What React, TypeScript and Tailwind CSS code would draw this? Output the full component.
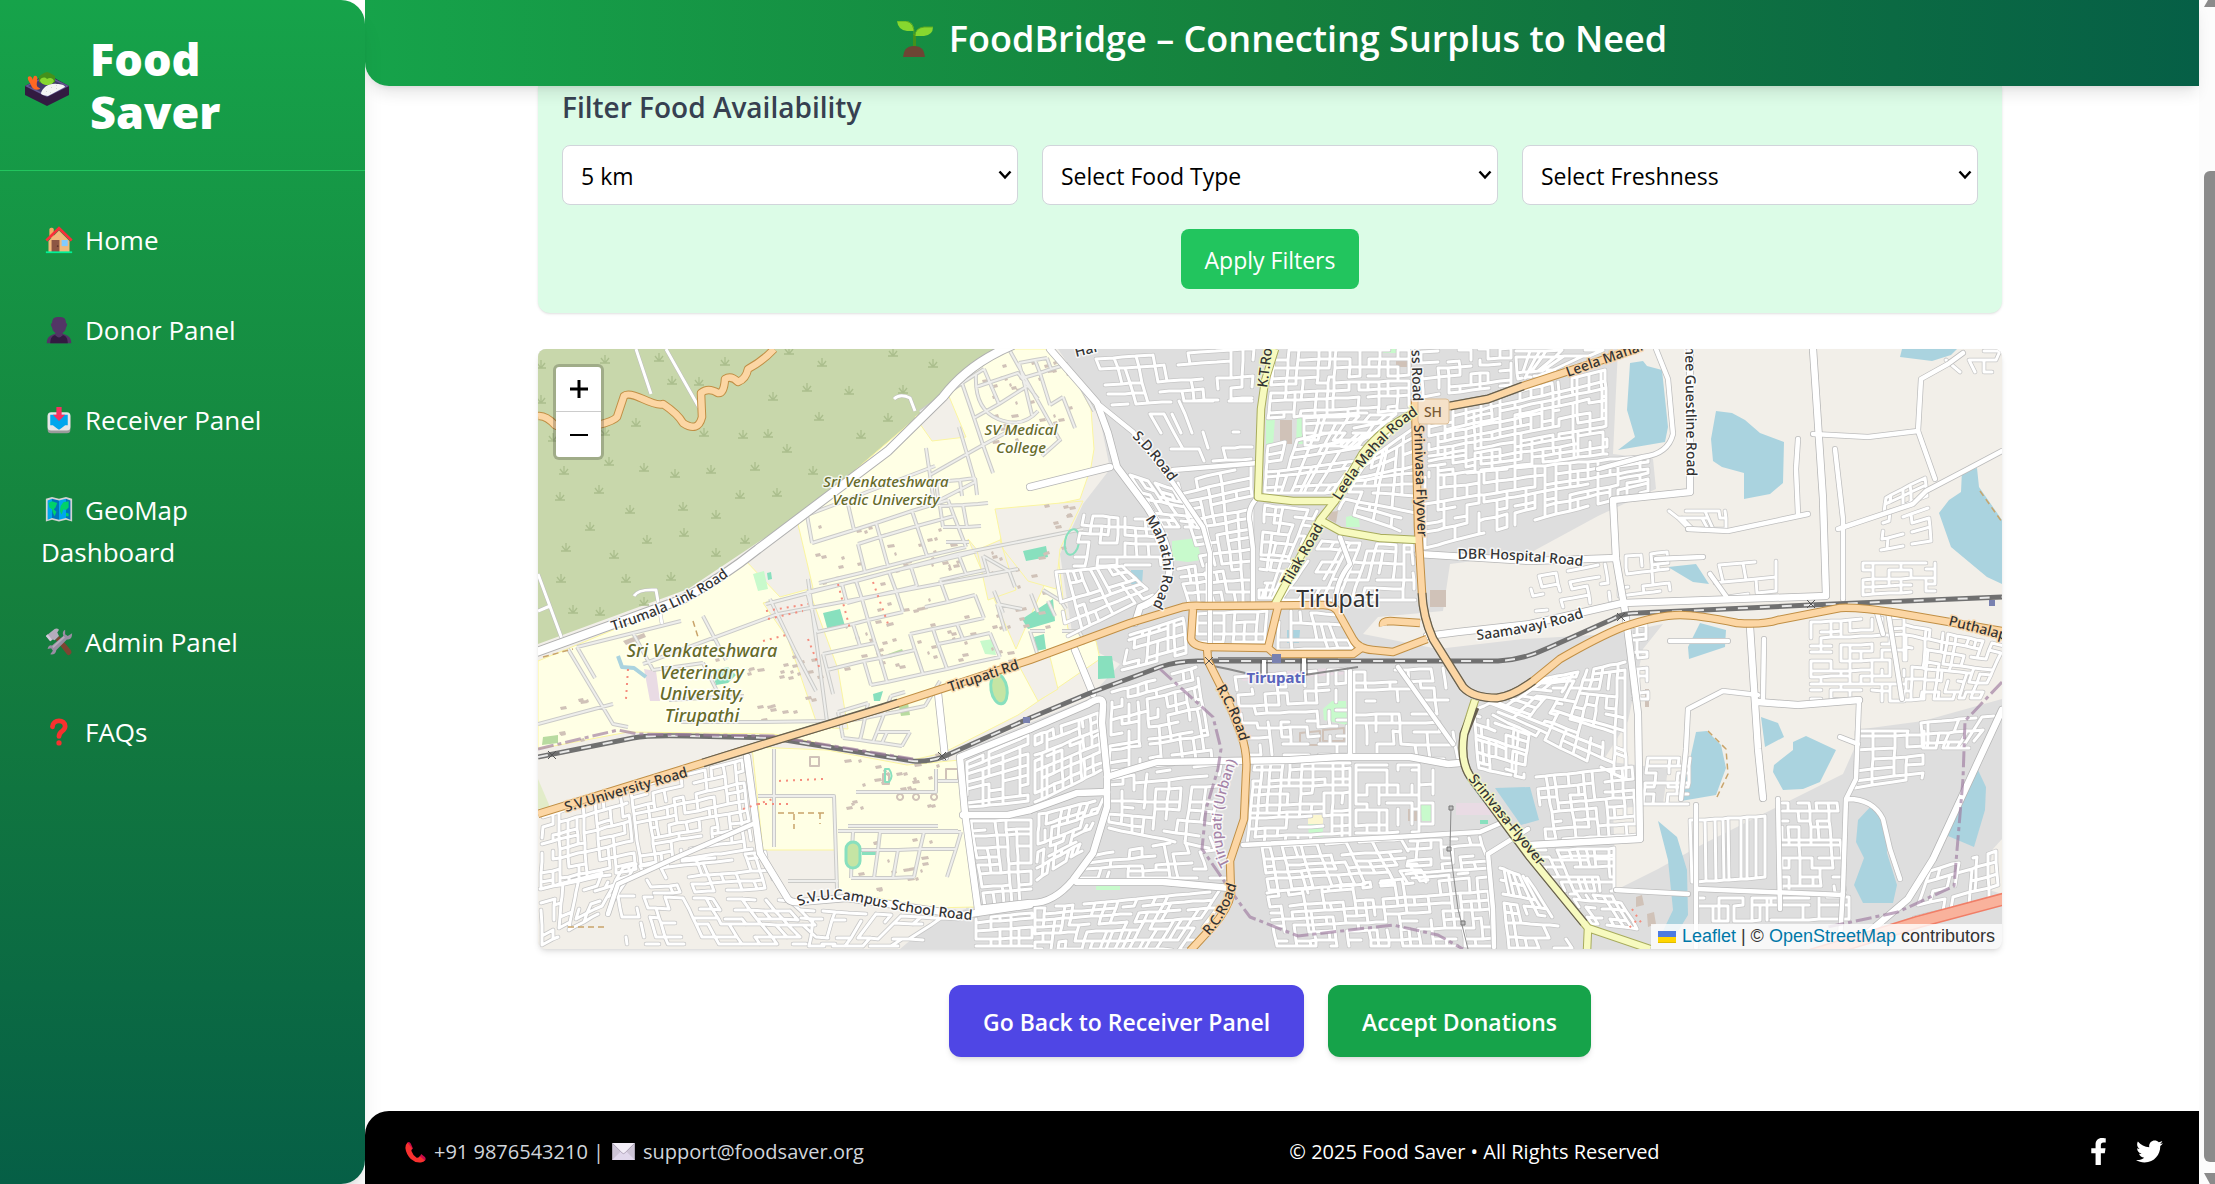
import React from "react";
import { FaFacebookF, FaTwitter } from "react-icons/fa";

/* ---------- small colour pictograms ---------- */

type IconProps = { className?: string };

const BentoIcon = ({ className }: IconProps) => (
  <svg viewBox="0 0 46 34" className={className} aria-hidden="true">
    <path d="M1 14 23 2l22 12v9L23 34 1 23z" fill="#321b41" />
    <path d="M1 14 23 3l22 11-22 11z" fill="#635994" />
    <path d="M4 14 23 5l19 9-19 9z" fill="#433b6b" />
    <path d="M15 5c2-3 4-3 5-4l3-1 3 1 5 3v6l-7 3-9-3z" fill="#44911b" />
    <path d="M16 8c2-3 5-3 7-1 3-2 6-1 7 2-1 3-4 4-7 4s-7-2-7-5z" fill="#86d72f" />
    <path d="M4 5c2-2 4 0 5 3 0-3 1-5 3-4 3 1 0 7 1 10 1 2 4 2 3 3-4 2-8 0-9-4C6 10 3 8 4 5z" fill="#ff6723" />
    <path d="M17 21c2-6 8-10 16-9 4 0 8 1 8 3L24 24c-4-1-7-1-7-3z" fill="#f4f4f4" />
    <path d="m22 19 1 1m4-5 1 1m4-3 1 1m-7 6 1 1m5-5 1 1" stroke="#d3d3d3" />
  </svg>
);

const HouseIcon = ({ className }: IconProps) => (
  <svg viewBox="0 0 32 32" className={className} aria-hidden="true">
    <path d="M5 4q0-2 2-2h1q2 0 2 2v10H5z" fill="#f3ad61" />
    <path d="M16 5 28 17v13H4V17z" fill="#f1b97c" />
    <path d="M7.500 16h9v14h-9z" fill="#8c5543" />
    <path d="M19 16h7v7h-7z" fill="#83cbff" />
    <path d="M1.500 16.500 16 2.500l14.500 14" fill="none" stroke="#f92f3a" strokeWidth="3" />
    <circle cx="14.500" cy="23" r="1" fill="#5d352a" />
    <path d="M1 29h30v2H1z" fill="#00f397" />
  </svg>
);

const PersonIcon = ({ className }: IconProps) => (
  <svg viewBox="0 0 32 32" className={className} aria-hidden="true">
    <path d="M2 31c0-7 4-9 10-11h8c6 2 10 4 10 11z" fill="#533566" />
    <path d="M6 31c0-7 3-9 7-10h6c4 1 7 3 7 10z" fill="#321b41" />
    <path d="M12 17h8v5q-4 5-8 0z" fill="#533566" />
    <path d="M8 8q0-7 6-7h4q6 0 6 7 2 1 1 3l-1 2q-1 7-8 7t-8-7l-1-2q-1-2 1-3z" fill="#533566" />
  </svg>
);

const InboxIcon = ({ className }: IconProps) => (
  <svg viewBox="0 0 32 32" className={className} aria-hidden="true">
    <rect x="3" y="8" width="26" height="23" rx="4" fill="#9b9b9b" />
    <rect x="3" y="7" width="26" height="21" rx="4" fill="#e6e6e6" />
    <path d="M6 10h20v12h-3l-4 3-3 2-3-2-4-3H6z" fill="#00a6ed" />
    <path d="M13 1h6v9h4l-7 7-7-7h4z" fill="#f92f60" />
  </svg>
);

const MapIcon = ({ className }: IconProps) => (
  <svg viewBox="0 0 32 32" className={className} aria-hidden="true">
    <path d="m1 3 7-2 8 2 8-2 7 2v26l-7-2-8 2-8-2-7 2z" fill="#d3d3d3" />
    <path d="m3 5 5-2v22l-5 2z" fill="#00a6ed" />
    <path d="m8 3 8 2v22l-8-2z" fill="#0074ba" />
    <path d="m16 5 8-2v22l-8 2z" fill="#00a6ed" />
    <path d="m24 3 5 2v22l-5-2z" fill="#0074ba" />
    <path d="m4 8 4-2 6 2-2 5-2 2 3 3-2 5-2-4-1-4-3-2zm14 3 3-4 6-1v7l-3 3-3-1-2 6-2-4zm6 8 3 1v3h-3z" fill="#00d26a" />
  </svg>
);

const ToolsIcon = ({ className }: IconProps) => (
  <svg viewBox="0 0 32 32" className={className} aria-hidden="true">
    <path d="m12 13 4-4 14 17q1 3-1 4-2 2-4 0z" fill="#7d4533" />
    <path d="m1 9 10-8q3-1 5 1l-2 3 2 4-5 5-2-1-3 2z" fill="#b4acbc" />
    <path d="m1 9 2-2 5 6-2 2z" fill="#d3cbdc" />
    <path d="M23 2q-4 2-2 7L8 20q-4-1-5 4l4-1 2 3-3 4q6 1 7-5l12-12q6 1 6-7l-5 3-3-2z" fill="#998ea4" />
    <path d="M22 10 9 22" stroke="#b4acbc" strokeWidth="2" />
  </svg>
);

const QuestionIcon = ({ className }: IconProps) => (
  <svg viewBox="0 0 32 32" className={className} aria-hidden="true">
    <path d="M8.500 10C9 1 23 1 23 9.500c0 6-7 5-7 11.500" fill="none" stroke="#f8312f" strokeWidth="5.500" strokeLinecap="round" />
    <circle cx="16" cy="28.500" r="3" fill="#f8312f" />
  </svg>
);

const SeedlingIcon = ({ className }: IconProps) => (
  <svg viewBox="0 0 36 36" className={className} aria-hidden="true">
    <path d="M17.500 26V13" stroke="#44911b" strokeWidth="3" />
    <path d="M0 0h9q8 1 8 10H10Q1 9 0 0z" fill="#86d72f" />
    <path d="M36 6h-9q-9 1-9 9h9q9-1 9-9z" fill="#86d72f" />
    <path d="M0 0h9q9 2 8 14M36 6h-9q-9 1-9 9" fill="none" stroke="#5ba81f" />
    <path d="M6 36q1-11 10-11h2q9 0 10 11z" fill="#6d4534" />
  </svg>
);

const PhoneIcon = ({ className }: IconProps) => (
  <svg viewBox="0 0 32 32" className={className} aria-hidden="true">
    <path d="M5 2q3-2 5 2l3 7-5 5zM20 28l5-9 5 4q3 3 0 6z" fill="#ca0b4a" />
    <path d="M5 2q-3 3-3 8 1 9 8 16 8 7 16 5 4-1 4-3L23 22q-3 3-5 2-5-3-7-9-1-3 1-4z" fill="#f8312f" />
  </svg>
);

const EnvelopeIcon = ({ className }: IconProps) => (
  <svg viewBox="0 0 32 24" className={className} aria-hidden="true">
    <path d="M0 0h32v24H0z" fill="#cdc4d6" />
    <path d="m0 24 12-12h8l12 12z" fill="#e1d8ec" />
    <path d="M0 0h32L18 14q-2 2-4 0z" fill="#f3eef8" />
    <path d="m0 0 14 14q2 2 4 0L32 0" fill="none" stroke="#998ea4" />
  </svg>
);

/* ---------- map drawing ---------- */

const randomFrom = (seed: number) => {
  let s = seed * 9301 + 49297;
  return () => {
    s = (s * 1103515245 + 12345) % 2147483648;
    return s / 2147483648;
  };
};

/** x and y of four corners (clockwise from top left), columns, rows, share of gaps */
type Quarter = [number, number, number, number, number, number, number, number, number, number, number];

const streetsOf = (q: Quarter, seed: number) => {
  const [ax, ay, bx, by, cx, cy, dx, dy, cols, rows, gaps] = q;
  const rnd = randomFrom(seed + 3);
  const us = Array.from({ length: cols + 1 }, (_, i) => (i + (rnd() - 0.5) * 0.6) / cols);
  const vs = Array.from({ length: rows + 1 }, (_, i) => (i + (rnd() - 0.5) * 0.6) / rows);
  const at = (u: number, v: number) => {
    const x = (1 - v) * ((1 - u) * ax + u * bx) + v * ((1 - u) * dx + u * cx);
    const y = (1 - v) * ((1 - u) * ay + u * by) + v * ((1 - u) * dy + u * cy);
    return `${Math.round(x)} ${Math.round(y)}`;
  };
  let d = "";
  vs.forEach((v) => {
    for (let i = 0; i < cols; i++) if (rnd() > gaps) d += `M${at(us[i], v)}L${at(us[i + 1], v)}`;
  });
  us.forEach((u) => {
    for (let j = 0; j < rows; j++) if (rnd() > gaps + 0.12) d += `M${at(u, vs[j])}L${at(u, vs[j + 1])}`;
  });
  return d;
};

const quarters: Quarter[] = [
  [560, 12, 718, 2, 716, 48, 575, 55, 12, 4, 0.35],
  [600, 50, 716, 50, 715, 112, 640, 115, 8, 4, 0.55],
  [738, 2, 872, 2, 872, 62, 732, 70, 13, 8, 0.2],
  [728, 98, 860, 72, 800, 146, 726, 146, 9, 6, 0.15],
  [768, 68, 872, 64, 820, 100, 768, 98, 10, 4, 0.2],
  [828, 112, 874, 78, 876, 186, 800, 160, 6, 9, 0.15],
  [886, 4, 975, 0, 975, 38, 888, 50, 8, 5, 0.25],
  [978, 0, 1070, 0, 1000, 28, 980, 32, 8, 3, 0.3],
  [888, 66, 1070, 22, 1072, 106, 888, 130, 19, 11, 0.18],
  [888, 130, 1112, 108, 1112, 140, 888, 196, 22, 6, 0.2],
  [590, 125, 636, 140, 664, 180, 625, 180, 5, 6, 0.2],
  [642, 136, 710, 120, 712, 252, 676, 252, 5, 13, 0.15],
  [725, 156, 782, 162, 738, 250, 720, 250, 5, 10, 0.15],
  [786, 192, 876, 196, 880, 250, 746, 250, 10, 6, 0.2],
  [545, 165, 615, 170, 622, 215, 535, 215, 8, 5, 0.2],
  [520, 225, 585, 218, 615, 245, 532, 285, 8, 5, 0.15],
  [640, 220, 668, 215, 668, 252, 650, 252, 3, 4, 0.2],
  [662, 266, 730, 264, 728, 292, 662, 292, 6, 3, 0.15],
  [742, 264, 800, 268, 815, 298, 740, 300, 6, 3, 0.2],
  [590, 285, 645, 268, 648, 305, 582, 322, 7, 4, 0.2],
  [575, 345, 660, 320, 676, 408, 572, 420, 10, 9, 0.3],
  [496, 385, 560, 362, 564, 422, 496, 455, 9, 7, 0.15],
  [572, 430, 680, 416, 668, 500, 572, 480, 9, 7, 0.35],
  [500, 466, 566, 450, 545, 500, 498, 530, 8, 7, 0.2],
  [556, 506, 668, 488, 686, 532, 545, 530, 10, 4, 0.35],
  [496, 560, 690, 542, 650, 598, 496, 598, 19, 6, 0.25],
  [700, 330, 812, 322, 812, 406, 712, 406, 9, 9, 0.4],
  [816, 322, 905, 318, 920, 408, 816, 406, 8, 8, 0.4],
  [714, 416, 815, 414, 815, 490, 706, 494, 10, 10, 0.14],
  [818, 414, 893, 414, 893, 482, 818, 484, 7, 7, 0.3],
  [722, 500, 865, 492, 890, 530, 728, 540, 13, 5, 0.2],
  [730, 542, 950, 520, 958, 598, 740, 598, 21, 8, 0.22],
  [870, 494, 940, 490, 948, 520, 866, 526, 7, 4, 0.25],
  [944, 360, 1005, 330, 1088, 310, 1090, 430, 12, 11, 0.22],
  [935, 365, 990, 385, 985, 430, 940, 420, 7, 6, 0.25],
  [1000, 430, 1092, 420, 1096, 486, 1010, 490, 10, 7, 0.2],
  [962, 520, 990, 530, 1035, 598, 970, 598, 6, 7, 0.2],
  [998, 500, 1078, 498, 1078, 540, 1020, 540, 8, 6, 0.18],
  [1032, 545, 1080, 548, 1100, 580, 1054, 575, 6, 4, 0.3],
  [1090, 278, 1110, 276, 1112, 350, 1092, 350, 2, 9, 0.2],
  [1110, 410, 1150, 410, 1148, 455, 1106, 455, 4, 6, 0.2],
  [1150, 456, 1226, 452, 1226, 540, 1152, 545, 9, 1, 0],
  [1160, 545, 1310, 545, 1310, 572, 1160, 575, 20, 2, 0.25],
  [1242, 452, 1300, 452, 1308, 545, 1242, 545, 6, 10, 0.25],
  [1322, 380, 1388, 380, 1386, 430, 1320, 440, 4, 6, 0.2],
  [1382, 375, 1455, 368, 1430, 400, 1384, 400, 7, 3, 0.15],
  [1275, 275, 1365, 270, 1365, 352, 1275, 350, 9, 10, 0.3],
  [1368, 276, 1464, 296, 1440, 350, 1368, 352, 11, 7, 0.18],
  [1395, 520, 1460, 500, 1464, 545, 1380, 565, 7, 4, 0.3],
  [1325, 215, 1400, 215, 1400, 242, 1325, 246, 6, 4, 0.3],
  [1345, 150, 1385, 130, 1390, 190, 1340, 200, 4, 6, 0.35],
  [1080, 210, 1132, 205, 1135, 240, 1082, 246, 5, 4, 0.25],
  [1170, 220, 1235, 215, 1235, 240, 1178, 246, 4, 2, 0.35],
  [992, 230, 1070, 215, 1075, 250, 1000, 262, 6, 4, 0.55],
  [1128, 160, 1190, 160, 1190, 180, 1150, 180, 6, 2, 0.4],
  [1400, 2, 1462, 2, 1455, 20, 1420, 20, 5, 2, 0.5],
  [4, 470, 90, 445, 100, 520, 2, 540, 10, 8, 0.22],
  [95, 440, 205, 412, 215, 500, 105, 515, 11, 9, 0.22],
  [2, 540, 100, 515, 70, 560, 4, 598, 8, 5, 0.4],
  [105, 515, 228, 500, 240, 540, 120, 545, 10, 4, 0.35],
  [80, 545, 250, 550, 300, 598, 90, 598, 14, 5, 0.4],
  [260, 560, 420, 570, 370, 598, 260, 598, 12, 3, 0.45],
  [430, 412, 492, 385, 492, 455, 430, 460, 5, 7, 0.12],
  [430, 470, 494, 468, 494, 552, 445, 556, 5, 9, 0.12],
  [440, 568, 494, 562, 494, 598, 440, 598, 5, 4, 0.12],
];

const campusQuarters: Quarter[] = [
  [385, 65, 470, 8, 520, 100, 400, 160, 4, 3, 0.4],
  [262, 165, 405, 110, 440, 200, 275, 240, 4, 3, 0.15],
  [400, 130, 450, 125, 458, 190, 410, 190, 3, 4, 0.4],
  [478, 8, 520, 2, 550, 60, 500, 100, 3, 3, 0.3],
  [275, 245, 440, 205, 480, 300, 300, 340, 7, 5, 0.3],
  [38, 300, 225, 255, 285, 375, 80, 375, 4, 3, 0.6],
  [450, 210, 520, 250, 545, 295, 480, 312, 4, 4, 0.4],
  [300, 362, 400, 330, 360, 400, 305, 390, 4, 3, 0.25],
  [308, 482, 420, 482, 405, 532, 306, 534, 4, 2, 0.05],
];

const streetPath = quarters.map(streetsOf).join("");
const campusPath =
  campusQuarters.map(streetsOf).join("") +
  "M438 25Q436 60 460 70T500 62M438 38 480 24 500 50M236 400V498M220 447H296L299 540M318 443H398V420M310 477H400M300 482H420M420 432H400M250 532H300M270 230 290 380M228 255 420 205 545 180M105 315 240 265 480 220M30 300 75 375 90 378M0 375 75 355";

const buildingPath = (() => {
  const rnd = randomFrom(77);
  const areas = [
    [275, 175, 150, 60], [300, 250, 170, 70], [440, 10, 90, 90], [450, 200, 60, 80],
    [170, 300, 110, 70], [300, 400, 110, 60], [320, 490, 80, 50], [20, 350, 40, 40], [500, 150, 40, 50],
  ];
  let d = "";
  areas.forEach(([x, y, w, h]) => {
    for (let i = 0; i < (w * h) / 260; i++) {
      const px = Math.round(x + rnd() * w);
      const py = Math.round(y + rnd() * h);
      const a = 2 + Math.round(rnd() * 5);
      d += `M${px} ${py}l${a} -1l1 3l-${a} 1z`;
    }
  });
  return d;
})();

const whiteRoads = [
  "M512 0 559 54 570 84 579 118 609 158Q636 200 631 225T602 258L597 274",
  "M492 138 572 118",
  "M1152 0V143L1075 151 1078 210 1087 262 1092 300 1100 365 1102 490 992 496",
  "M1275 0 1280 75 1285 150 1288 247 1085 254 1050 262 992 275 920 283 889 287",
  "M880 205 992 212 1078 209",
  "M1212 278 1220 400 1225 449",
  "M1220 353 1260 356 1321 351",
  "M1464 361 1395 510 1370 550 1330 584",
  "M492 461 539 444 569 443",
  "M569 428 619 413 752 411 800 408 872 408 910 415 922 414",
  "M492 380 550 355Q566 345 565 357L564 374 569 424V458L555 504 535 531Q515 555 492 554L440 560",
  "M539 533 625 533 692 539",
  "M209 408 222 504 250 550Q253 554 262 553L309 549 425 566 492 556",
  "M422 408 427 464 440 560M425 466 470 466 492 461M400 344 407 408M422 408 492 380M537 301 555 345",
];

const mediumRoads = [
  "M559 54 595 83 635 134 665 178 672 204V301",
  "M635 121 720 114M720 148Q708 160 712 175L715 200V254",
  "M802 188 812 215Q798 232 797 256",
  "M705 496 859 488 942 483 965 473M950 505 955 560 956 598M950 505 990 480",
  "M812 322V408M1350 262 1364 350M1464 102 1430 120 1388 142 1375 155 1300 180M1275 85 1330 88 1380 82 1397 130",
  "M1380 82 1383 30 1410 15 1425 4M1118 0 1130 30 1135 85Q1130 105 1105 108L1060 120",
  "M1321 351 1318 430 1308 450 1305 540 1302 590M1310 450Q1335 450 1345 470L1352 500 1362 530",
  "M1220 346 1185 342 1150 360 1148 400 1143 450M1305 546 1160 540M1320 395 1302 388",
  "M1158 456V598M1240 450 1242 560M1226 290 1225 350M1132 292 1190 292",
  "M860 318 915 395M70 565 80 535 135 510 215 475M100 30",
  "M1260 90 1258 120 1260 165M1297 100 1305 170V250M1150 180 1190 182 1270 165",
  "M1118 210 1165 208M1190 250 1172 225M1338 260 1345 285M1078 541 1150 545",
];

const forestPaths =
  "M98 0 113 45M128 0 163 62M0 225 24 290 M0 262 12 257M356 50Q362 44 372 49L377 62M96 247Q100 240 118 241L124 275";

const linkRoad = "M-4 304 145 250Q185 228 220 200L350 102 405 48Q430 15 475 -4";

const orangeRoads = [
  "M0 67Q8 66 17 76 40 88 60 76 76 72 79 68L86 47Q90 43 105 50T125 55Q140 65 145 74 160 84 164 68L163 44Q170 38 180 44 186 45 187 30 193 26 200 33 208 30 210 20 225 12 236 0",
  "M0 465 142 421 239 391 345 359 492 311 592 274 645 258Q655 256 665 257L785 256Q798 256 801 265L815 290Q820 300 835 301L855 303 889 290",
  "M655 260 653 290Q655 297 669 298L730 299 740 258M730 299 737 305H815L826 297",
  "M845 277Q844 272 852 272L882 274",
  "M877 50 880 178 884 244Q885 268 895 290L925 338Q935 349 959 349 975 347 995 332L1022 310Q1060 288 1085 278 1120 266 1142 266 1160 266 1199 274 1225 276 1240 271L1302 259Q1320 258 1359 264L1464 282",
  "M877 60 912 57 950 50 985 37 1098 0",
  "M669 298 670 312 690 352 703 385Q710 405 708 425L706 470 692 512 693 545Q690 560 675 577L652 602",
];

const yellowRoads = [
  "M737 0 727 32 723 60 720 148 755 152H797",
  "M737 255 782 171 797 152 825 104Q845 78 877 64",
  "M782 171 802 182 842 189 880 191",
  "M937 351 926 385Q922 412 932 427L992 508 1050 579 1112 600M1050 579 1049 602",
];

const railway =
  "M0 408 95 389Q110 386 150 387L235 389 375 412Q390 413 405 408L492 369 552 344 622 318Q640 312 660 312H960Q985 311 1010 299L1075 270Q1085 264 1100 264L1272 256 1464 248";

const waters = [
  "1092,14 1105,12 1109,17 1124,21 1130,78 1127,93 1080,101 1097,88 1089,61",
  "1178,62 1194,64 1207,71 1222,84 1246,93 1245,134 1232,145 1206,150 1206,124 1184,118 1175,112 1173,90",
  "1364,0 1419,0 1413,6 1394,12 1362,8",
  "1424,121 1439,119 1441,138 1464,171 1464,235 1449,228 1413,198 1401,164 1411,151 1423,143",
  "1130,218 1158,215 1171,235 1155,233",
  "1162,274 1188,281 1187,298 1151,310 1150,298",
  "1223,368 1240,374 1246,388 1227,398",
  "1255,393 1268,387 1298,401 1282,433 1265,440 1245,441 1235,423 1236,416 1255,401",
  "1158,383 1169,382 1183,396 1188,419 1178,446 1143,452",
  "1120,472 1139,488 1149,521 1150,566 1139,584 1124,584 1135,561 1130,511",
  "1335,455 1348,471 1349,504 1359,536 1355,554 1325,554 1316,536 1326,509 1318,493 1320,471",
  "1440,421 1448,438 1447,461 1436,498 1403,484 1422,444",
  "957,439 992,438 1001,471 983,476",
  "593,221 605,221 604,236 593,235",
  "749,281 762,281 761,294 749,294",
];

const tufts = [
  [67, 10], [121, 8], [187, 12], [251, 1], [284, 13], [355, 3], [395, 14], [134, 31], [161, 32], [235, 47],
  [269, 38], [311, 41], [365, 40], [98, 73], [281, 67], [350, 68], [166, 83], [205, 85], [230, 84], [323, 85],
  [249, 99], [71, 112], [26, 121], [106, 118], [137, 124], [173, 120], [217, 117], [275, 121], [22, 147],
  [61, 140], [202, 145], [239, 143], [92, 160], [145, 157], [178, 165], [52, 177], [146, 183], [109, 190],
  [28, 198], [76, 205], [178, 203], [207, 190], [23, 229], [88, 229], [133, 227], [35, 260], [62, 262], [106, 252],
  [3, 15], [3, 50], [15, 88], [67, 82],
];

const StreetMap = () => (
  <svg
    viewBox="0 0 1464 600"
    preserveAspectRatio="xMidYMid slice"
    className="block h-full w-full"
    role="img"
    aria-label="Street map of Tirupati"
    strokeLinejoin="round"
    fill="none"
  >
    <defs>
      <path id="p-tirumala" d="M75 282 Q150 258 192 226" />
      <path id="p-svu" d="M28 463 L162 424" />
      <path id="p-tirupatird" d="M412 343 L496 315" />
      <path id="p-campus" d="M261 557 Q290 545 330 555 T432 571" />
      <path id="p-sd" d="M594 88 Q615 108 642 147" />
      <path id="p-mahathi" d="M607 170 Q640 215 613 260" />
      <path id="p-kt" d="M729 39 L736 -14" />
      <path id="p-leela" d="M802 152 Q840 90 882 64" />
      <path id="p-tilak" d="M751 238 L788 174" />
      <path id="p-cross" d="M873 -22 L875 56" />
      <path id="p-sri" d="M876 76 L880 194" />
      <path id="p-leela2" d="M1030 28 L1114 -2" />
      <path id="p-guest" d="M1147 -24 L1149 140" />
      <path id="p-dbr" d="M920 210 Q960 208 1044 217" />
      <path id="p-saama" d="M939 291 Q1000 284 1050 267" />
      <path id="p-put" d="M1410 276 L1490 297" />
      <path id="p-rc1" d="M678 339 Q698 372 704 402" />
      <path id="p-rc2" d="M671 587 Q692 565 701 526" />
      <path id="p-urban" d="M692 515 Q670 480 704 398" />
      <path id="p-sri2" d="M930 430 L1006 524" />
      <path id="p-har" d="M538 8 L570 0" />
    </defs>

    <rect width="1464" height="600" fill="#dedede" />
    <path fill="#f2efe9" d="M0 290 420 30 450 0H520L560 60 572 120 545 155 522 205 535 290 582 315 550 350 428 400V560L400 568 362 600H0z" />
    <path fill="#f2efe9" d="M1080 0H1464V350L1385 372 1325 380 1305 425 1225 465 1165 495 1120 520 1078 541 1075 460 1125 455 1130 420 1065 412 1090 372 1105 300 1125 275 1075 285 985 290 900 300 825 285 840 268 905 262 912 215 990 205 1060 167 1118 140 1115 110 1075 105z" />
    <path fill="#f2efe9" d="M1464 490 1455 500 1448 540 1464 545z" />
    <path fill="#e2ecc9" d="M0 430 12 458 0 460z" />
    <path fill="#c8d7ab" d="M0 0H470Q440 8 425 22L405 42 350 95 270 160 150 240 0 295z" />
    <path fill="#ffffe5" stroke="#fbf5a0" d="M0 312 150 250 210 212 259 171 400 50 435 20 470 0H516L540 35 553 60 556 100 553 118 542 150 495 160 470 165 462 192 440 202 430 190 478 300 520 205 525 250 530 280 558 292 562 310 480 366 405 404 370 412 235 385 90 383 0 400z" />
    <path fill="#ffffe5" stroke="#fbf5a0" d="M214 398 289 401 369 416 422 411 427 464 437 558 392 559 300 541 297 501 225 501z" />
    <path fill="#f2efe9" stroke="#fbf5a0" d="M259 171 207 211 242 248 275 239zM377 68 410 45 428 88 394 92zM439 201 462 191 478 241 450 251zM457 160 545 152 522 200 518 240 490 232 465 200zM225 254 272 244 300 320 310 380 280 378 250 290zM480 315 510 300 520 340 500 352z" />
    <path fill="#e9dbe4" d="M106 320 118 322 122 352 112 352zM918 454 955 454 960 466 918 466zM700 325 810 318 812 325 705 332z" />

    {waters.map((points) => (
      <polygon key={points} points={points} fill="#aad3df" />
    ))}
    <path d="M80 307 84 318 96 319 108 328" stroke="#aad3df" strokeWidth="4" />
    <path fill="#c8facc" d="M634 192 659 189 663 211 650 213 634 211zM728 69H737L735 97H728zM759 69H767V95H758zM785 360 794 352H808L809 376 786 371zM770 475 785 474V488H771zM558 537H582V541H558zM882 456H893V472H884zM808 168 820 165 822 178H808zM845 0H862V4H845zM215 225 226 222 230 240 220 242zM442 292 455 290 458 306 447 305z" />
    <path fill="#fcf7d0" d="M770 466H785V475H770z" />
    <path fill="#88e0be" d="M285 264 302 260 307 277 290 282zM485 202 508 197 510 208 488 212zM484 270 515 250 517 272 490 280zM560 307 574 307 577 329 560 330zM174 322 190 318 198 326 190 334 178 336zM335 345 345 342 342 352 336 352zM324 502H338V506H324zM229 224 233 223 234 230 230 231zM942 471H950V475H942zM496 288 506 285 508 300 498 302z" />
    <path fill="#b8dba0" d="M361 358 370 354 372 366 363 367zM5 388 20 386 20 394 4 396zM350 305 364 300 366 304 352 309z" />
    <path fill="#d0c2b8" d="M742 71H754V95H742zM858 10H874V18H858zM892 241H908V258H892zM792 163 800 162 798 174 790 170zM85 292 106 284 108 288 88 296zM1098 548 1104 546 1106 556 1098 558zM1109 565 1116 563 1118 575 1110 578zM870 460h12v12h-12zM1107 340h4v18h-4z" />
    <path stroke="#d0c2b8" strokeWidth="2" d="M762 384 782 382V396H762zM785 381 806 379V392H785zM272 408h9v9h-9zM408 420h12v12h-12zM362 445a3 3 0 1 0 .1 0M378 445a3 3 0 1 0 .1 0M396 445a3 3 0 1 0 .1 0M345 425h6v10h-6z" />

    <path d={buildingPath} fill="#d0c2b8" />

    <g stroke="#abbe8d" strokeWidth="1.300">
      {tufts.map(([x, y]) => (
        <path key={`${x}-${y}`} d={`M${x - 5} ${y + 4}h10M${x} ${y + 4}v-8M${x} ${y + 4}l-4 -5M${x} ${y + 4}l4 -5`} />
      ))}
    </g>

    <path d={campusPath} stroke="#cbcbc8" strokeWidth="4" />
    <path d={campusPath} stroke="#eeeeec" strokeWidth="2" />

    <g fill="#c5e5a4" stroke="#88e0be" strokeWidth="3">
      <ellipse cx="461" cy="340" rx="8" ry="15" transform="rotate(-10 461 340)" />
      <rect x="308" y="493" width="14" height="26" rx="7" />
      <ellipse cx="534" cy="193" rx="7" ry="13" fill="none" strokeWidth="2" transform="rotate(10 534 193)" />
      <path d="M347 420h4q5 7 0 13h-4z" fill="none" strokeWidth="2" />
    </g>

    <path d={streetPath} stroke="#c6c6c6" strokeWidth="4.500" strokeLinecap="round" />
    <path d={streetPath} stroke="#ffffff" strokeWidth="3" strokeLinecap="round" />

    <g stroke="#bdbdbd" strokeWidth="6" strokeLinecap="round">
      {mediumRoads.map((d) => <path key={d} d={d} />)}
    </g>
    <path d={forestPaths} stroke="#bdbdbd" strokeWidth="4" />
    <path d={forestPaths} stroke="#fff" strokeWidth="3" />
    <g stroke="#b5b5b5" strokeWidth="8" strokeLinecap="round">
      {whiteRoads.map((d) => <path key={d} d={d} />)}
    </g>
    <path d={linkRoad} stroke="#b0b0b0" strokeWidth="10" />
    <path d={linkRoad} stroke="#fff" strokeWidth="8" />
    <g stroke="#ffffff" strokeWidth="4.500" strokeLinecap="round">
      {mediumRoads.map((d) => <path key={d} d={d} />)}
    </g>
    <g stroke="#ffffff" strokeWidth="6.500" strokeLinecap="round">
      {whiteRoads.map((d) => <path key={d} d={d} />)}
    </g>

    <path d={railway} stroke="#707070" strokeWidth="5" />
    <path d={railway} stroke="#e8e8e8" strokeWidth="2" strokeDasharray="10 12" />
    <path d="M670 316 690 320 720 327H760L820 318M680 309H800" stroke="#8a8a8a" strokeWidth="2" />
    <path d="M726 311V326M766 309V326" stroke="#fff" strokeWidth="4" />
    <path d="M723 311V326M729 311V326M763 309V326M769 309V326" stroke="#555" />

    <g stroke="#9d7a9e" strokeOpacity=".65" strokeWidth="3" strokeDasharray="16 4 4 4">
      <path d="M0 400 80 381 100 385 235 387 375 410M622 320 675 368 683 400 680 420 668 460 664 500 695 545 712 568 760 587 855 576 900 586 925 600" />
      <path d="M1464 333 1427 372 1425 430 1416 537 1360 563 1290 578" />
    </g>
    <path d="M913 459 912 500 920 560 930 600" stroke="#8b8b8b" />
    <path d="M911 457h4v4h-4zM909 498h4v4h-4zM923 572h4v4h-4z" stroke="#777" fill="#bbb" />
    <path d="M225 292 248 286 M300 235 312 280M335 233 350 275M205 460 235 450M90 320 88 350M285 430 240 432M220 455 255 455M1094 560 1104 575M1098 572 1090 580M228 262 270 255M230 270 265 262M270 290 282 320" stroke="#f58c7d" strokeWidth="2" strokeDasharray="2 5" />
    <path d="M1442 142 1464 173M1170 382 1188 400 1190 425 1178 450M30 578H70M155 272 160 288M5 308 35 300M240 464H290M256 465V480M282 464V475" stroke="#c9a46a" strokeWidth="1.500" strokeDasharray="6 4" />

    <path d="M1470 549 1380 573 1300 598 1260 610" stroke="#f07e67" strokeWidth="13" />
    <path d="M1470 549 1380 573 1300 598 1260 610" stroke="#f9b29c" strokeWidth="10" />
    <g stroke="#a8ac5c" strokeWidth="8.500">
      {yellowRoads.map((d) => <path key={d} d={d} />)}
    </g>
    <g stroke="#c08f45" strokeWidth="8.500">
      {orangeRoads.map((d) => <path key={d} d={d} />)}
    </g>
    <path d="M884 244Q885 268 895 290L925 338Q935 349 959 349 975 347 995 332M165 414 239 391 360 354M912 57 950 50 985 37M937 358 926 385Q922 412 932 427L992 508 1046 574" stroke="#67604f" strokeWidth="9" />
    <g stroke="#f7fabf" strokeWidth="6.500">
      {yellowRoads.map((d) => <path key={d} d={d} />)}
    </g>
    <g stroke="#fcd6a4" strokeWidth="6.500">
      {orangeRoads.map((d) => <path key={d} d={d} />)}
    </g>

    <path d="M734 305h9v9h-9zM485 368h7v6h-7zM1451 251h6v6h-6z" fill="#7981b0" />
    <path d="m10 402 8 8m0-8-8 8m657-102 8 8m0-8-8 8M400 403l8 8m0-8-8 8m679-147 8 8m0-8-8 8m190-21 8 8m0-8-8 8" stroke="#555" />

    <rect x="880" y="50" width="31" height="25" rx="3" fill="#f5e1c9" stroke="#dcbf98" />

    <g fontFamily="'Noto Sans', sans-serif" fontSize="14" fontWeight="500" fill="#333" stroke="#fff" strokeOpacity=".75" strokeWidth="3" paintOrder="stroke">
      <text><textPath href="#p-tirumala">Tirumala Link Road</textPath></text>
      <text><textPath href="#p-campus">S.V.U.Campus School Road</textPath></text>
      <text><textPath href="#p-sd">S.D.Road</textPath></text>
      <text><textPath href="#p-mahathi">Mahathi Road</textPath></text>
      <text><textPath href="#p-cross">Cross Road</textPath></text>
      <text><textPath href="#p-guest">Ramee Guestline Road</textPath></text>
      <text><textPath href="#p-dbr">DBR Hospital Road</textPath></text>
      <text><textPath href="#p-saama">Saamavayi Road</textPath></text>
      <text><textPath href="#p-har">Har</textPath></text>
      <g stroke="#fcd6a4">
        <text><textPath href="#p-svu">S.V.University Road</textPath></text>
        <text><textPath href="#p-tirupatird">Tirupati Rd</textPath></text>
        <text><textPath href="#p-sri">Srinivasa Flyover</textPath></text>
        <text><textPath href="#p-leela2">Leela Mahal</textPath></text>
        <text><textPath href="#p-put">Puthalapattu</textPath></text>
        <text><textPath href="#p-rc1">R.C.Road</textPath></text>
        <text><textPath href="#p-rc2">R.C.Road</textPath></text>
      </g>
      <g stroke="#f7fabf">
        <text><textPath href="#p-kt">K.T.Road</textPath></text>
        <text><textPath href="#p-leela">Leela Mahal Road</textPath></text>
        <text><textPath href="#p-tilak">Tilak Road</textPath></text>
        <text><textPath href="#p-sri2">Srinivasa Flyover</textPath></text>
      </g>
      <text fill="#a583a8"><textPath href="#p-urban">Tirupati (Urban)</textPath></text>
      <text x="895" y="68" textAnchor="middle" fill="#7a5a35" stroke="none">SH</text>
      <text x="800" y="258" textAnchor="middle" fontSize="23" fontWeight="400">Tirupati</text>
      <text x="738" y="334" textAnchor="middle" fontSize="15" fontWeight="700" fill="#5a64bd">Tirupati</text>
      <g fill="#666b2a" fontSize="15" fontStyle="italic" textAnchor="middle">
        <text x="483" y="86">SV Medical</text>
        <text x="483" y="104">College</text>
        <text x="348" y="138">Sri Venkateshwara</text>
        <text x="348" y="156">Vedic University</text>
        <g fontSize="18">
          <text x="164" y="308">Sri Venkateshwara</text>
          <text x="164" y="330">Veterinary</text>
          <text x="164" y="351">University,</text>
          <text x="164" y="373">Tirupathi</text>
        </g>
      </g>
    </g>
  </svg>
);

/* ---------- page parts ---------- */

const navItems = [
  { label: "Home", Icon: HouseIcon },
  { label: "Donor Panel", Icon: PersonIcon },
  { label: "Receiver Panel", Icon: InboxIcon },
  { label: "GeoMap Dashboard", Icon: MapIcon },
  { label: "Admin Panel", Icon: ToolsIcon },
  { label: "FAQs", Icon: QuestionIcon },
];

const Sidebar = () => (
  <aside className="z-20 w-[365px] shrink-0 rounded-r-3xl bg-linear-to-b/srgb from-[#16a34a] via-[#15803d] to-[#065f46] text-white shadow-xl">
    <div className="flex items-center gap-5 border-b border-[#22c55e] py-8 pr-12 pl-6">
      <BentoIcon className="mt-2 h-[34px] w-[46px] shrink-0" />
      <h1 className="text-[45px] leading-[53px] font-extrabold">Food Saver</h1>
    </div>
    <nav className="flex flex-col gap-3 p-6 pt-[30px]">
      {navItems.map(({ label, Icon }) => (
        <a key={label} href="#" className="px-[17px] py-[18px] text-[26px] leading-[42px]">
          <Icon className="mr-3 ml-1 inline h-7 w-7 align-[-4px]" />
          {label}
        </a>
      ))}
    </nav>
  </aside>
);

const FilterSelect = ({ label, options }: { label: string; options: string[] }) => (
  <div className="relative flex-1">
    <select
      aria-label={label}
      className="h-[60px] w-full appearance-none rounded-lg border border-[#d1d5db] bg-white pt-[2px] pl-[18px] text-[23px] text-black"
    >
      {options.map((o) => (
        <option key={o}>{o}</option>
      ))}
    </select>
    <svg viewBox="0 0 14 10" className="pointer-events-none absolute top-[25px] right-[6px] h-[10px] w-[14px]" aria-hidden="true">
      <path d="m1.500 1.500 5.500 6 5.500-6" fill="none" stroke="#000" strokeWidth="2.500" />
    </svg>
  </div>
);

const FilterPanel = () => (
  <section className="rounded-b-xl bg-[#dcfce7] px-6 pb-6 shadow-sm">
    <h2 className="mb-[17px] text-[28px] leading-[42px] font-semibold text-[#374151]">Filter Food Availability</h2>
    <div className="flex gap-6">
      <FilterSelect label="Distance" options={["5 km", "10 km", "20 km"]} />
      <FilterSelect label="Food type" options={["Select Food Type", "Veg", "Non-Veg"]} />
      <FilterSelect label="Freshness" options={["Select Freshness", "Fresh", "Moderate"]} />
    </div>
    <div className="mt-6 flex justify-center">
      <button className="h-[60px] rounded-lg bg-[#22c55e] px-6 pt-[2px] text-[23px] text-white">Apply Filters</button>
    </div>
  </section>
);

const MapPanel = () => (
  <section className="relative mt-9 h-[600px] overflow-hidden rounded-lg shadow-md">
    <StreetMap />
    <div className="absolute top-[15px] left-[15px] flex flex-col overflow-hidden rounded-md border-[3px] border-black/20 bg-white bg-clip-padding">
      <button aria-label="Zoom in" className="flex h-[45px] w-[45px] items-center justify-center border-b border-[#ccc]">
        <svg viewBox="0 0 20 20" className="h-5 w-5"><path d="M10 1v18M1 10h18" stroke="#000" strokeWidth="3" /></svg>
      </button>
      <button aria-label="Zoom out" className="flex h-[45px] w-[45px] items-center justify-center">
        <svg viewBox="0 0 20 20" className="h-5 w-5"><path d="M1 10h18" stroke="#000" strokeWidth="2" /></svg>
      </button>
    </div>
    <div className="absolute right-0 bottom-0 flex h-[25px] items-center bg-white/80 px-[7px] font-['Liberation_Sans',sans-serif] text-[18px] whitespace-pre text-[#333]">
      <svg viewBox="0 0 18 12" className="mr-[6px] h-3 w-[18px]" aria-hidden="true">
        <path d="M0 0h18v6H0z" fill="#4c7be1" />
        <path d="M0 6h18v5H0z" fill="#ffd500" />
        <path d="M0 11h18v1H0z" fill="#e0bc00" />
      </svg>
      <a href="#" className="text-[#0078a8]">Leaflet</a>
      <span> | © </span>
      <a href="#" className="text-[#0078a8]">OpenStreetMap</a>
      <span> contributors</span>
    </div>
  </section>
);

const Footer = () => (
  <footer className="mt-auto flex h-[73px] items-center justify-between rounded-tl-3xl bg-black pt-2 pr-9 pl-[39px] text-[20px] text-white">
    <p className="flex items-center text-[#d1d5db]">
      <PhoneIcon className="mr-2 h-[22px] w-[22px]" />
      <span>+91 9876543210 |</span>
      <EnvelopeIcon className="mx-2 h-[17px] w-[23px]" />
      <span>support@foodsaver.org</span>
    </p>
    <p>© 2025 Food Saver • All Rights Reserved</p>
    <div className="flex items-center gap-6">
      <a href="#" aria-label="Facebook"><FaFacebookF size={27} /></a>
      <a href="#" aria-label="Twitter"><FaTwitter size={27} /></a>
    </div>
  </footer>
);

const ScrollRail = () => (
  <div className="flex w-4 shrink-0 flex-col bg-[#fcfcfc] pl-[5px]" aria-hidden="true">
    <svg viewBox="0 0 11 8" className="h-2 w-[11px]"><path d="M0 7 4 0h7v7z" fill="#8b8b8b" /></svg>
    <div className="mt-[163px] mb-[11px] flex-1 rounded-l-md bg-[#8b8b8b]" />
    <svg viewBox="0 0 11 11" className="h-[11px] w-[11px]"><path d="M0 0h11v11H6z" fill="#8b8b8b" /></svg>
  </div>
);

export default function App() {
  return (
    <div className="flex min-h-screen bg-white font-['Open_Sans',sans-serif]">
      <Sidebar />
      <div className="flex min-w-0 flex-1 flex-col">
        <header className="z-10 flex h-[86px] items-center justify-center gap-4 rounded-bl-3xl bg-linear-to-r/srgb from-[#16a34a] via-[#15803d] to-[#065f46] pb-2 text-white shadow-lg">
          <SeedlingIcon className="h-9 w-9" />
          <p className="text-[36px] leading-[48px] font-semibold">FoodBridge – Connecting Surplus to Need</p>
        </header>
        <div className="pr-6">
          <main className="mx-auto w-full max-w-[1464px]">
            <FilterPanel />
            <MapPanel />
            <div className="mt-9 flex justify-center gap-6 text-[23px] font-semibold text-white">
              <button className="h-[72px] rounded-xl bg-[#4f46e5] px-[34px] pt-[2px] shadow-md">Go Back to Receiver Panel</button>
              <button className="h-[72px] rounded-xl bg-[#16a34a] px-[34px] pt-[2px] shadow-md">Accept Donations</button>
            </div>
          </main>
        </div>
        <Footer />
      </div>
      <ScrollRail />
    </div>
  );
}
